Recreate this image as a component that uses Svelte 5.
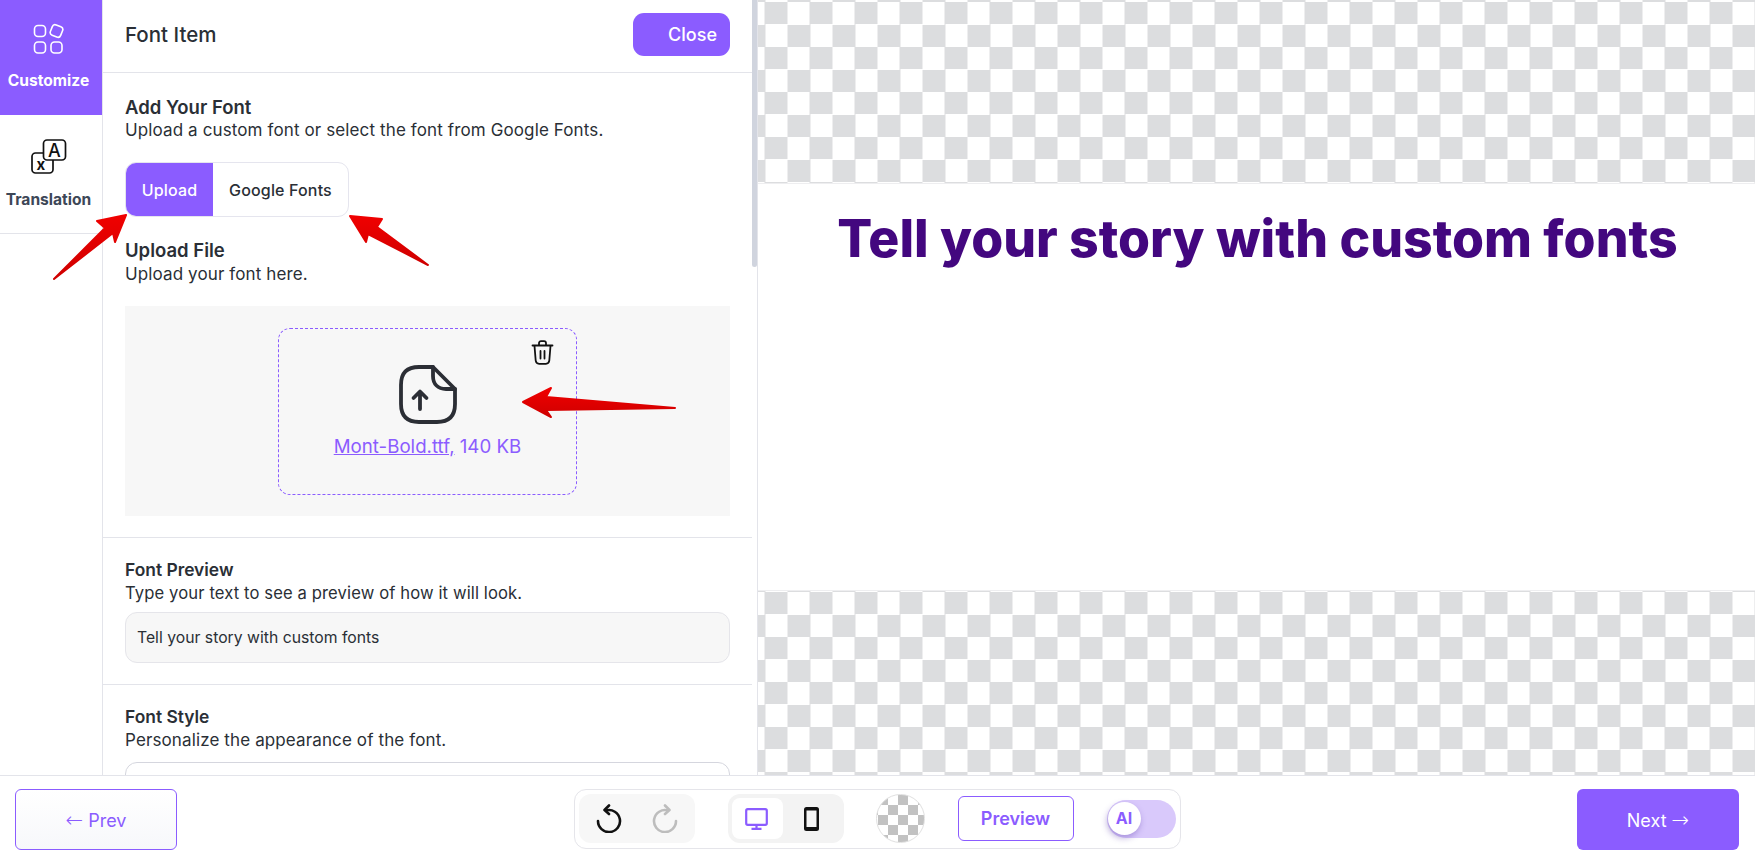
<script>
  let previewText = 'Tell your story with custom fonts'
</script>

<div class="app">
  <div class="main">
    <nav class="rail">
      <div class="tab active">
        <svg width="32" height="32" viewBox="0 0 32 32" fill="none" stroke="#fff" stroke-width="1.6">
          <rect x="1.5" y="2.5" width="11" height="11" rx="3.5" />
          <rect x="18" y="2.5" width="11" height="11" rx="3" transform="rotate(22 23.5 8)" />
          <rect x="1.5" y="19" width="11" height="11" rx="3.5" />
          <rect x="18" y="19" width="11" height="11" rx="3.5" />
        </svg>
        <span>Customize</span>
      </div>
      <div class="tab">
        <svg width="36" height="36" viewBox="0 0 36 36" fill="none" stroke="#111" stroke-width="1.7">
          <rect x="1" y="14" width="21" height="20" rx="3.500" fill="#fff" />
          <rect x="12.500" y="1" width="22" height="20" rx="3.500" fill="#fff" />
          <text x="23.500" y="17.500" class="glyph-a">A</text>
          <text x="5.500" y="31" class="glyph-x">x</text>
        </svg>
        <span>Translation</span>
      </div>
    </nav>

    <section class="panel">
      <div class="panel-body">
        <header class="panel-head">
          <h2>Font Item</h2>
          <button class="close">Close</button>
        </header>

        <div class="group first">
          <h3>Add Your Font</h3>
          <p>Upload a custom font or select the font from Google Fonts.</p>
          <div class="segment">
            <span class="seg on">Upload</span>
            <span class="seg">Google Fonts</span>
          </div>
          <h3 class="upload-title">Upload File</h3>
          <p>Upload your font here.</p>
          <div class="drop-area">
            <div class="dropzone">
              <svg class="trash" width="23" height="25" viewBox="0 0 23 25" fill="none" stroke="#111" stroke-width="1.8" stroke-linecap="round" stroke-linejoin="round">
                <path d="M1.5 5.5h20" />
                <path d="M8 5V3.2C8 2 9 1.2 10 1.2h3c1 0 2 .8 2 2V5" />
                <path d="M3.5 6l1.2 14.5c.2 2 1.6 3.3 3.4 3.3h6.8c1.8 0 3.2-1.3 3.4-3.3L19.500 6" />
                <path d="M9.500 11v7.500M13.500 11v7.500" />
              </svg>
              <svg width="58" height="59" viewBox="0 0 58 59" fill="none" stroke="#2b2e35" stroke-width="3.8" stroke-linecap="round" stroke-linejoin="round">
                <path d="M34 2H20C8 2 2 8 2 20v19c0 12 6 18 18 18h18c12 0 18-6 18-18V24z" />
                <path d="M34 2v9c0 8 5 13 13 13h9" />
                <path d="M21 44V27M14.500 33l6.500-6.500L27.500 33" />
              </svg>
              <div class="file"><u>Mont-Bold.ttf,</u> 140 KB</div>
            </div>
          </div>
        </div>

        <div class="group">
          <h3 class="small">Font Preview</h3>
          <p class="tight">Type your text to see a preview of how it will look.</p>
          <div class="field">{previewText}</div>
        </div>

        <div class="group style">
          <h3 class="small">Font Style</h3>
          <p>Personalize the appearance of the font.</p>
          <div class="select"></div>
        </div>
      </div>
      <div class="thumb"></div>
    </section>

    <section class="canvas">
      <div class="checker top"></div>
      <div class="stage"><h1>{previewText}</h1></div>
      <div class="checker bottom"></div>
    </section>
  </div>

  <footer class="bar">
    <button class="prev"><span class="arr">←</span> Prev</button>
    <div class="tools">
      <div class="pill history">
        <svg width="26" height="29" viewBox="0 0 26 29" fill="none" stroke="#111" stroke-width="2.6" stroke-linecap="round" stroke-linejoin="round">
          <path d="M10 6.500A11 11 0 1 1 2 17" />
          <path d="M13 1.500L8.500 6 13 10" />
        </svg>
        <svg width="26" height="29" viewBox="0 0 26 29" fill="none" stroke="#bdbdbd" stroke-width="2.6" stroke-linecap="round" stroke-linejoin="round">
          <path d="M16 6.500A11 11 0 1 0 24 17" />
          <path d="M13 1.500L17.500 6 13 10" />
        </svg>
      </div>
      <div class="pill devices">
        <span class="device on">
          <svg width="23" height="22" viewBox="0 0 23 22" fill="none">
            <rect x="1.200" y="1.200" width="20.600" height="15.600" rx="1.500" stroke="#8b5cff" stroke-width="2.200" />
            <path d="M11.500 17v3M6.500 20.800h10" stroke="#8b5cff" stroke-width="2.200" />
          </svg>
        </span>
        <span class="device">
          <svg width="15" height="24" viewBox="0 0 15 24">
            <rect width="15" height="24" rx="2.500" fill="#111" />
            <rect x="2.500" y="3.500" width="10" height="16.500" fill="#f4f4f4" />
          </svg>
        </span>
      </div>
      <div class="swatch"></div>
      <button class="preview">Preview</button>
      <div class="toggle"><span class="knob">AI</span></div>
    </div>
    <button class="next">Next <span class="arr">→</span></button>
  </footer>

  <svg class="arrows" width="1755" height="858" viewBox="0 0 1755 858">
    <defs>
      <linearGradient id="red" x1="0" y1="0" x2="0" y2="1">
        <stop offset="0" stop-color="#f00000" />
        <stop offset="1" stop-color="#cf0000" />
      </linearGradient>
    </defs>
    <g fill="url(#red)" stroke="url(#red)" stroke-width="2" stroke-linejoin="round">
      <path d="M126 215L97 221 105 228 54 279 113 233 115 242z" />
      <path d="M350 216L382 219 377 227 428 265 368 234 366 242z" />
      <path d="M523 402L551 388 546 397 675 408 546 410 551 417z" />
    </g>
  </svg>
</div>

<style>
  :global(body) {
    margin: 0;
    overflow: hidden;
  }

  .app {
    position: relative;
    width: 1755px;
    height: 858px;
    font-family: Inter, "Liberation Sans", sans-serif;
    color: #2a2f36;
    background: #fff;
    overflow: hidden;
  }

  .main {
    display: flex;
    height: 775px;
  }

  .rail {
    width: 102px;
    flex: none;
    border-right: 1px solid #e3e4ea;
  }

  .tab {
    height: 119px;
    display: flex;
    flex-direction: column;
    align-items: center;
    padding: 24px 5px 0 0;
    box-sizing: border-box;
    border-bottom: 1px solid #e3e4ea;
    gap: 15px;
    font-size: 15.6px;
    font-weight: 700;
    color: #3d4757;
  }

  .tab.active {
    height: 115px;
    padding-top: 23px;
    background: #8b5cff;
    color: #fff;
    border-bottom: 0;
    gap: 16px;
  }

  .glyph-a {
    font: 500 18px Inter, sans-serif;
    fill: #111;
    stroke: none;
    text-anchor: middle;
  }

  .glyph-x {
    font: 700 15px Inter, sans-serif;
    fill: #111;
    stroke: none;
  }

  .panel {
    width: 655px;
    flex: none;
    display: flex;
    border-right: 1px solid #e3e4ea;
    box-sizing: border-box;
    overflow: hidden;
  }

  .panel-body {
    width: 649px;
    flex: none;
  }

  .thumb {
    width: 5px;
    height: 267px;
    background: #d0d4de;
    border-radius: 0 0 3px 3px;
  }

  .panel-head {
    height: 72px;
    display: flex;
    align-items: center;
    justify-content: space-between;
    padding: 0 22px;
    border-bottom: 1px solid #e3e4ea;
  }

  h2 {
    margin: 0 0 3px;
    font-size: 20.500px;
    font-weight: 500;
  }

  .close {
    width: 97px;
    height: 43px;
    margin-bottom: 3px;
    border: 0;
    border-radius: 11px;
    background: #8b5cff;
    color: #fff;
    font: 500 18px Inter, sans-serif;
    text-align: right;
    padding: 0 13px 0 0;
  }

  .group {
    padding: 20px 22px 21px;
    border-bottom: 1px solid #e3e4ea;
  }

  .group.first {
    padding-top: 22px;
  }

  .group.style {
    padding-top: 20px;
    border-bottom: 0;
  }

  h3 {
    margin: 0;
    font-size: 18.500px;
    line-height: 24px;
    font-weight: 600;
  }

  h3.small {
    font-size: 17.400px;
  }

  p {
    margin: 0;
    font-size: 17px;
    letter-spacing: 0.12px;
    line-height: 22px;
  }

  p.tight {
    font-size: 16.600px;
  }

  .segment {
    display: flex;
    width: 224px;
    height: 55px;
    margin-top: 21px;
    border: 1px solid #e5e5ee;
    border-radius: 11px;
    box-sizing: border-box;
    overflow: hidden;
    font-size: 16px;
    font-weight: 500;
    letter-spacing: 0.15px;
    line-height: 55px;
  }

  .seg {
    flex: 1;
    text-align: center;
  }

  .seg.on {
    flex: none;
    width: 87px;
    background: #8b5cff;
    color: #fff;
  }

  .upload-title {
    margin: 21px 0 1px;
  }

  .drop-area {
    height: 210px;
    margin-top: 21px;
    background: #f7f7f7;
    display: flex;
    justify-content: center;
    align-items: center;
  }

  .dropzone {
    position: relative;
    width: 299px;
    height: 167px;
    box-sizing: border-box;
    padding-top: 36px;
    border: 1px dashed #8b5cff;
    border-radius: 12px;
    display: flex;
    flex-direction: column;
    align-items: center;
  }

  .trash {
    position: absolute;
    top: 11px;
    right: 22px;
  }

  .file {
    margin-top: 12px;
    font-size: 18.700px;
    line-height: 22px;
    color: #8b5cff;
  }

  .field {
    height: 51px;
    margin-top: 8px;
    padding: 0 11px;
    box-sizing: border-box;
    line-height: 50px;
    font-size: 15.750px;
    background: #f7f7f7;
    border: 1px solid #e5e5ea;
    border-radius: 12px;
  }

  .select {
    height: 51px;
    margin-top: 11px;
    border: 1px solid #d5d6de;
    border-radius: 12px;
  }

  .canvas {
    flex: 1;
    display: flex;
    flex-direction: column;
    min-width: 0;
  }

  .checker {
    background: repeating-conic-gradient(#dcdddf 0 25%, #fff 0 50%) -15.5px 2px / 45px 45px;
  }

  .checker.top {
    height: 183px;
    border-bottom: 1px solid #eeeef0;
  }

  .checker.bottom {
    height: 184px;
    background-position: -15.5px 1px;
    border-top: 1px solid #eeeef0;
  }

  .stage {
    flex: 1;
    text-align: center;
    padding-left: 2px;
  }

  h1 {
    margin: 22px 0 0;
    font-size: 51.750px;
    line-height: 64px;
    font-weight: 800;
    color: #43077f;
    white-space: nowrap;
  }

  .bar {
    height: 83px;
    box-sizing: border-box;
    padding: 5px 16px 0 15px;
    border-top: 1px solid #e3e4ea;
    display: flex;
    align-items: center;
    justify-content: space-between;
  }

  .prev,
  .next {
    width: 162px;
    height: 61px;
    border-radius: 6px;
    font: 400 18px Inter, sans-serif;
  }

  .arr {
    font-family: "DejaVu Sans", sans-serif;
    font-size: 21px;
    font-weight: 300;
  }

  .prev {
    border: 1px solid #8b5cff;
    background: linear-gradient(#fff, #f7f8fb);
    color: #8b5cff;
  }

  .next {
    border: 0;
    background: #8b5cff;
    color: #fff;
  }

  .tools {
    width: 607px;
    height: 60px;
    margin-bottom: 2px;
    box-sizing: border-box;
    padding: 0 4px;
    display: flex;
    align-items: center;
    border: 1px solid #e5e5ea;
    border-radius: 12px;
  }

  .pill {
    width: 116px;
    height: 49px;
    flex: none;
    box-sizing: border-box;
    border-radius: 12px;
    display: flex;
    align-items: center;
  }

  .history {
    background: #f7f7f7;
    justify-content: center;
    gap: 30px;
  }

  .devices {
    margin-left: 33px;
    background: #f3f3f3;
    padding: 0 4px;
  }

  .device {
    width: 51px;
    height: 41px;
    display: flex;
    align-items: center;
    justify-content: center;
    border-radius: 8px;
  }

  .device.on {
    background: #fff;
    margin-right: 3px;
  }

  .device.on svg {
    margin-right: 2px;
  }

  .swatch {
    width: 49px;
    height: 49px;
    flex: none;
    margin-left: 32px;
    box-sizing: border-box;
    border: 1px solid #e0e0e0;
    border-radius: 50%;
    background: repeating-conic-gradient(#c2c2c2 0 25%, #fff 0 50%) 11px 0 / 20px 20px;
  }

  .preview {
    width: 116px;
    height: 45px;
    flex: none;
    margin-left: 33px;
    background: #fff;
    border: 1px solid #8b5cff;
    border-radius: 6px;
    color: #8b5cff;
    font: 600 18px Inter, sans-serif;
  }

  .toggle {
    width: 69px;
    height: 38px;
    flex: none;
    margin-left: 33px;
    background: #d9c9fb;
    border-radius: 19px;
    display: flex;
    align-items: center;
  }

  .knob {
    width: 33px;
    height: 33px;
    margin-left: 1px;
    border-radius: 50%;
    background: #fff;
    box-shadow: -1px 3px 6px rgba(90, 60, 170, 0.4);
    color: #8b5cff;
    font-size: 16px;
    font-weight: 700;
    text-align: center;
    line-height: 33px;
  }

  .arrows {
    position: absolute;
    inset: 0;
    pointer-events: none;
  }
</style>
